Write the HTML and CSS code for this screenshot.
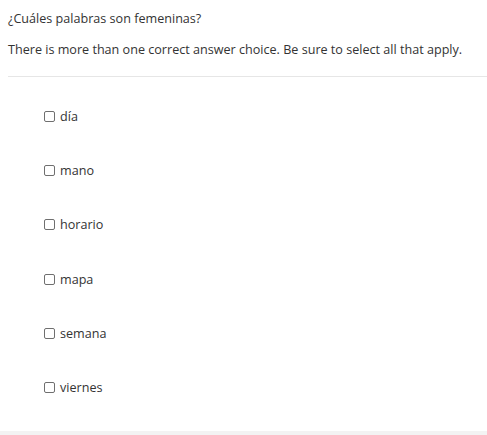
FILE: index.html
```html
<!DOCTYPE html>
<html>
<head>
<meta charset="utf-8">
<link rel="stylesheet" href="styles.css">
</head>
<body>
<div class="page">
  <div class="question">
    <p class="prompt">¿Cuáles palabras son femeninas?</p>
    <p class="hint">There is more than one correct answer choice. Be sure to select all that apply.</p>
  </div>
  <ul class="choices">
    <li class="choice"><span class="box"></span><span class="label">día</span></li>
    <li class="choice"><span class="box"></span><span class="label">mano</span></li>
    <li class="choice"><span class="box"></span><span class="label">horario</span></li>
    <li class="choice"><span class="box"></span><span class="label">mapa</span></li>
    <li class="choice"><span class="box"></span><span class="label">semana</span></li>
    <li class="choice"><span class="box"></span><span class="label">viernes</span></li>
  </ul>
</div>
<div class="footer"></div>
</body>
</html>
```
FILE: styles.css
```css
html, body {
  margin: 0;
  padding: 0;
  background: #ffffff;
}
body {
  font-family: "Open Sans", "Liberation Sans", sans-serif;
  font-size: 12.6px;
  color: #333333;
  height: 435px;
  display: flex;
  flex-direction: column;
  overflow: hidden;
}
.page {
  flex: 1;
  padding-left: 8px;
}
.question {
  border-bottom: 1px solid #e6e6e6;
  padding-top: 10px;
  padding-bottom: 18px;
}
.prompt {
  margin: 0;
  line-height: 17px;
}
.hint {
  margin: 14px 0 0 0;
  line-height: 17px;
}
.choices {
  list-style: none;
  margin: 0;
  padding: 31px 0 0 36px;
  display: flex;
  flex-direction: column;
  gap: 37.2px;
}
.choice {
  display: flex;
  align-items: center;
  height: 17px;
}
.box {
  width: 9px;
  height: 9px;
  border: 1px solid #6f6f6f;
  border-radius: 2px;
  margin-right: 5px;
  background: #fff;
}
.label {
  line-height: 17px;
}
.footer {
  height: 4px;
  background: #f3f3f3;
}
```
